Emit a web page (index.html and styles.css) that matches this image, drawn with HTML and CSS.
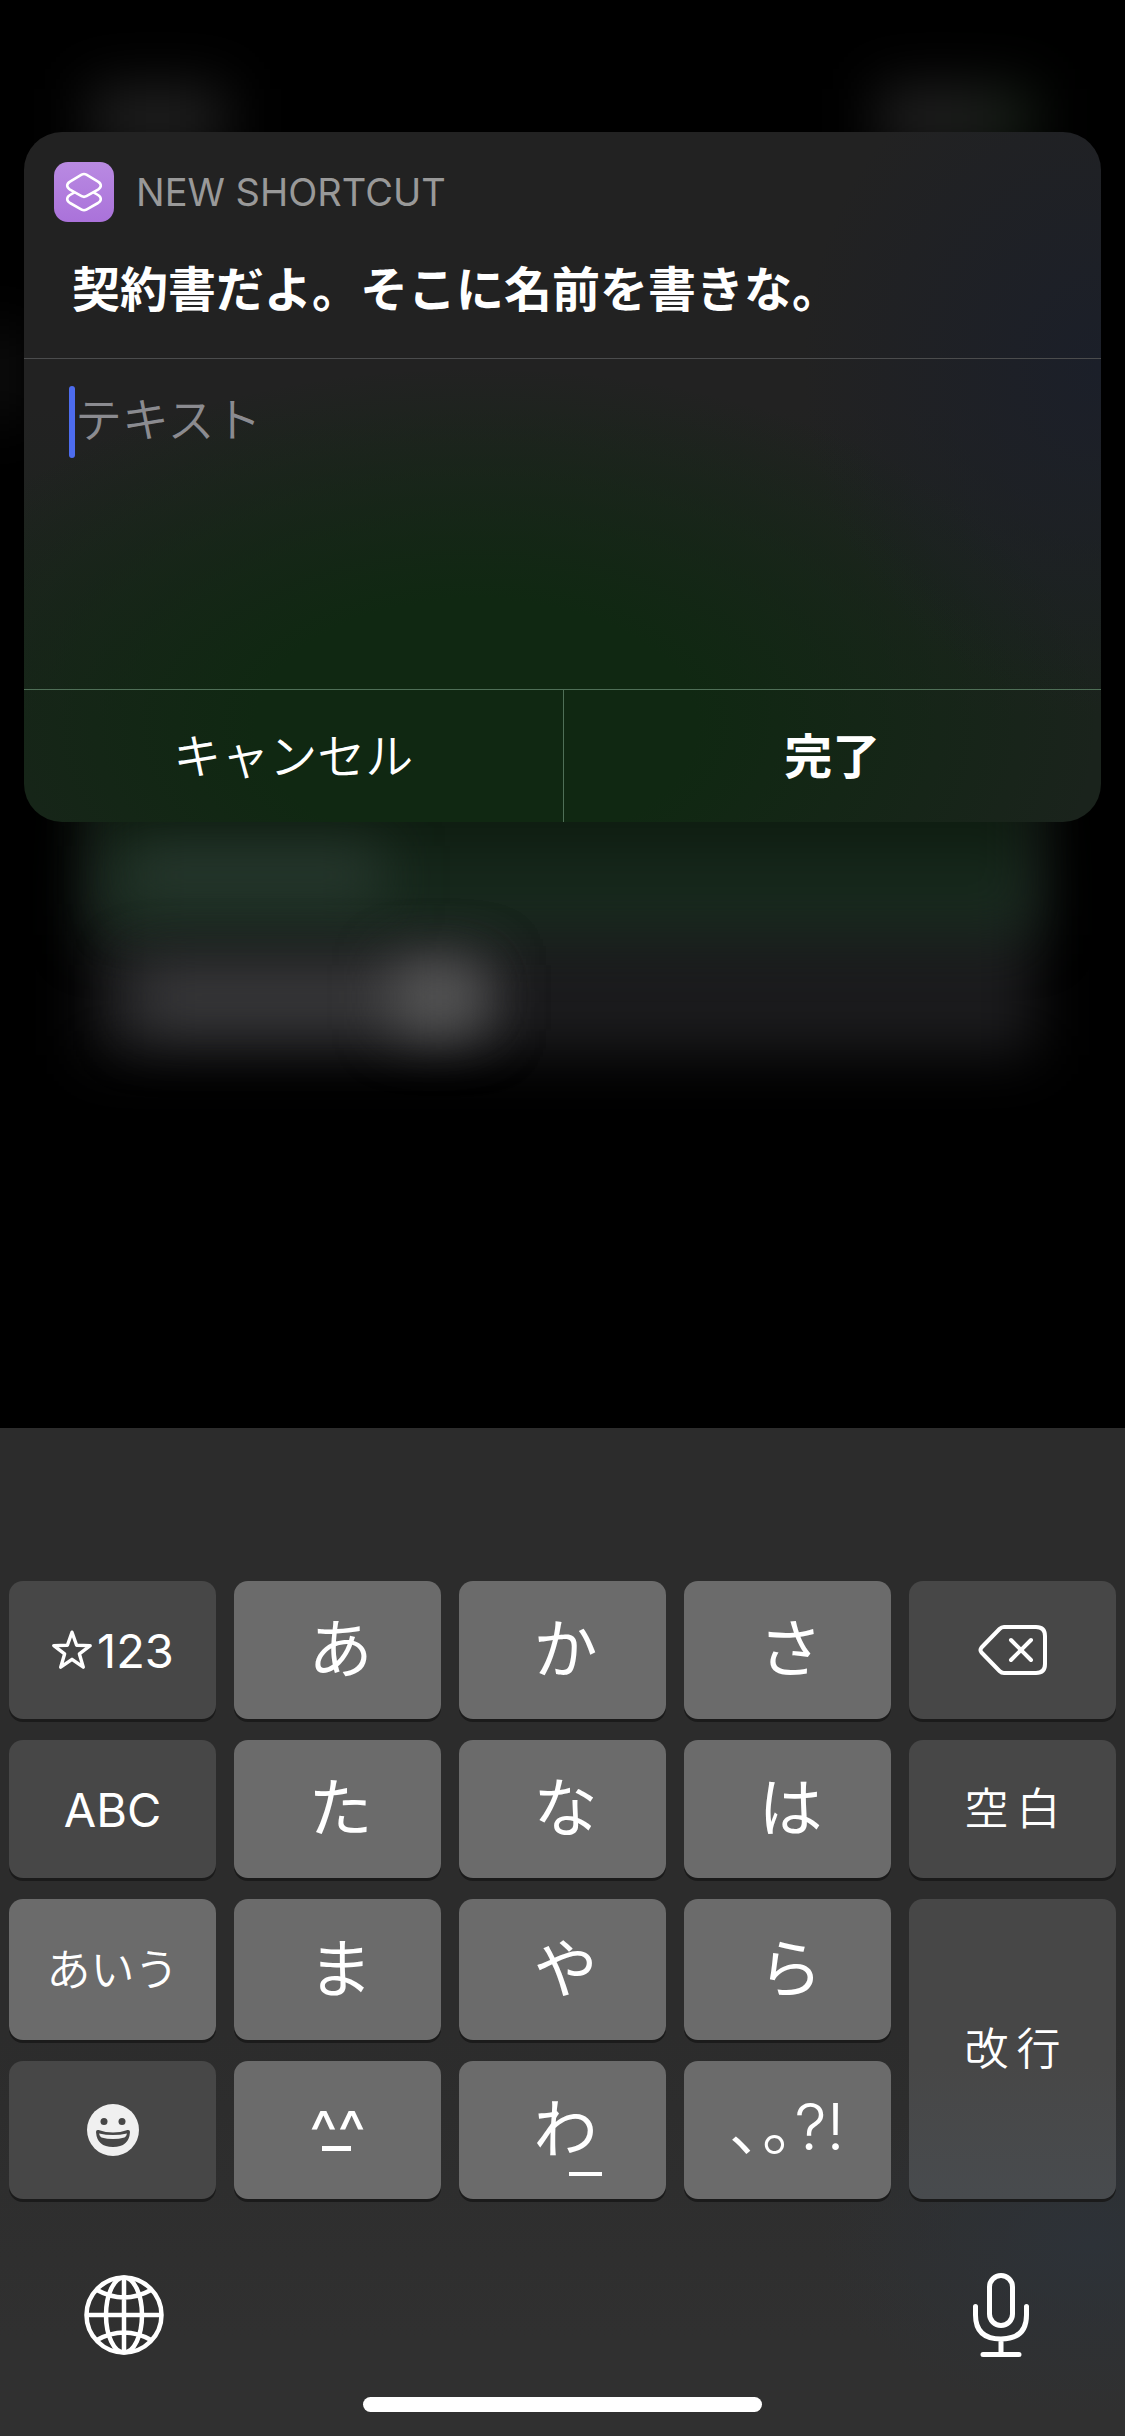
FILE: index.html
```html
<!DOCTYPE html>
<html lang="ja">
<head>
<meta charset="utf-8">
<meta name="viewport" content="width=device-width, initial-scale=1">
<title>New Shortcut</title>
<link rel="stylesheet" href="styles.css">
</head>
<body>
<div class="backdrop" aria-hidden="true">
  <i class="blob blob-tab-left"></i>
  <i class="blob blob-tab-right"></i>
  <i class="blob blob-side"></i>
  <i class="blob blob-panel"></i>
  <i class="blob blob-tile"></i>
  <i class="blob blob-tile-text"></i>
  <i class="blob blob-row-text"></i>
  <i class="blob blob-row-spot"></i>
</div>

<main class="stage">
  <form class="dialog">
    <header class="dialog-head">
      <div class="app">
        <svg class="app-icon" viewBox="0 0 60 60" aria-hidden="true">
          <defs>
            <linearGradient id="tile" x1="0" y1="0" x2="0" y2="1">
              <stop offset="0" stop-color="#b98ae2"/>
              <stop offset="1" stop-color="#aa72da"/>
            </linearGradient>
          </defs>
          <rect width="60" height="60" rx="14" fill="url(#tile)"/>
          <g fill="none" stroke="#fff" stroke-width="2.6" stroke-linejoin="round" stroke-linecap="round">
            <path d="M27.6 12.7Q30 11.4 32.4 12.7L44 19.6Q46.8 21.3 46.8 23.6T44 27.6L32.4 34.2Q30 35.5 27.6 34.2L16 27.6Q13.2 25.9 13.2 23.6T16 19.6Z"/>
            <path d="M20 30.600L16 33Q13.200 34.700 13.200 37T16 41L27.600 47.600Q30 48.900 32.400 47.600L44 41Q46.800 39.300 46.800 37T44 33L40 30.600"/>
          </g>
        </svg>
        <span class="app-name">NEW SHORTCUT</span>
      </div>
      <h1 class="prompt"><label for="answer">契約書だよ。そこに名前を書きな。</label></h1>
    </header>
    <div class="field">
      <span class="caret"></span>
      <textarea id="answer" class="answer" placeholder="テキスト"></textarea>
    </div>
    <div class="actions">
      <button type="button" class="action">キャンセル</button>
      <button type="submit" class="action action-done">完了</button>
    </div>
  </form>
</main>

<section class="keyboard" aria-label="キーボード">
  <div class="keys">
    <button class="key key-dark key-latin"><svg class="star" viewBox="0 0 42 42" aria-hidden="true"><path d="M21 3.200L25.600 16.300L39.200 16.600L28.400 24.900L32.300 38.200L21 30.300L9.700 38.200L13.600 24.900L2.800 16.600L16.400 16.300Z" fill="none" stroke="#fff" stroke-width="3.400" stroke-linejoin="round"/></svg>123</button>
    <button class="key key-kana">あ</button>
    <button class="key key-kana">か</button>
    <button class="key key-kana">さ</button>
    <button class="key key-dark" aria-label="削除">
      <svg class="delete" viewBox="0 0 70 52" aria-hidden="true" fill="none" stroke="#fff" stroke-width="4" stroke-linecap="round" stroke-linejoin="round">
        <path d="M26 3H58Q67 3 67 12V40Q67 49 58 49H26Q23.500 49 21.500 47L3.500 28.500Q1.500 26 3.500 23.500L21.500 5Q23.500 3 26 3Z"/>
        <path d="M33 16L53 36M53 16L33 36"/>
      </svg>
    </button>

    <button class="key key-dark key-latin">ABC</button>
    <button class="key key-kana">た</button>
    <button class="key key-kana">な</button>
    <button class="key key-kana">は</button>
    <button class="key key-dark key-word">空&#8201;白</button>

    <button class="key key-word">あいう</button>
    <button class="key key-kana">ま</button>
    <button class="key key-kana">や</button>
    <button class="key key-kana">ら</button>
    <button class="key key-dark key-word key-return">改&#8201;行</button>

    <button class="key key-dark" aria-label="絵文字">
      <svg class="emoji" viewBox="0 0 52 52" aria-hidden="true">
        <circle cx="26" cy="26" r="26" fill="#f0f0f0"/>
        <circle cx="17" cy="17.500" r="3.500" fill="#474747"/>
        <circle cx="35" cy="17.500" r="3.500" fill="#474747"/>
        <path d="M9 28Q9 25.500 11.500 26Q26 31 40.500 26Q43 25.500 43 28Q42 43 26 43Q10 43 9 28Z" fill="#474747"/>
        <path d="M12 29.500Q26 32.500 40 29.500Q39.500 32.500 37.500 33.500Q26 36.500 14.500 33.500Q12.500 32.500 12 29.500Z" fill="#f0f0f0"/>
      </svg>
    </button>
    <button class="key key-face">^^</button>
    <button class="key key-kana key-wa">わ</button>
    <button class="key key-marks">､｡?!</button>
  </div>

  <div class="tools">
    <button class="tool" aria-label="次のキーボード">
      <svg class="globe" viewBox="0 0 80 80" aria-hidden="true" fill="none" stroke="#fff" stroke-width="4.500">
        <circle cx="40" cy="40" r="37.500"/>
        <ellipse cx="40" cy="40" rx="18" ry="37.500"/>
        <path d="M40 2V78M2 40H78M13 15Q40 30 67 15M13 65Q40 50 67 65"/>
      </svg>
    </button>
    <button class="tool" aria-label="音声入力">
      <svg class="mic" viewBox="0 0 56 84" aria-hidden="true" fill="none" stroke="#fff" stroke-width="5" stroke-linecap="round">
        <rect x="16.500" y="2.500" width="23" height="50" rx="11.500"/>
        <path d="M2.500 33.500V42Q2.500 66 28 66Q53.500 66 53.500 42V33.500M28 66V81M10 81.500H46"/>
      </svg>
    </button>
  </div>
  <div class="home"></div>
</section>
</body>
</html>
```
FILE: styles.css
```css
* {
  box-sizing: border-box;
}

body {
  margin: 0;
  min-height: 100vh;
  display: flex;
  flex-direction: column;
  position: relative;
  overflow-x: hidden;
  background: #000;
  color: #fff;
  font-family: Inter, "Noto Sans CJK JP", sans-serif;
}

button {
  border: 0;
  padding: 0;
  background: none;
  color: inherit;
  font: inherit;
}

svg {
  display: block;
}

/* Dimmed, blurred app content behind the dialog */
.backdrop {
  position: absolute;
  inset: 0;
  overflow: hidden;
}

.blob {
  position: absolute;
  filter: blur(28px);
}

.blob-tab-left {
  left: 8%;
  width: 12%;
  top: 88px;
  height: 60px;
  background: #222;
}

.blob-tab-right {
  right: 8%;
  width: 14%;
  top: 88px;
  height: 60px;
  background: linear-gradient(90deg, #222 50%, #142014);
}

.blob-side {
  left: -20px;
  width: 32px;
  top: 330px;
  height: 90px;
  background: #181818;
}

.blob-panel {
  left: 8%;
  right: 8%;
  top: 700px;
  height: 355px;
  background: #1b1b1d;
}

.blob-tile {
  left: 8%;
  right: 8%;
  top: 700px;
  height: 235px;
  background: linear-gradient(#0d1b0f 50%, #182a1e 80%);
}

.blob-tile-text {
  left: 11%;
  width: 23%;
  top: 845px;
  height: 60px;
  background: #27382e;
}

.blob-row-text {
  left: 12%;
  width: 31%;
  top: 965px;
  height: 66px;
  background: #3a3a3c;
}

.blob-row-spot {
  left: 35%;
  width: 8%;
  top: 965px;
  height: 64px;
  background: #5a5a5a;
}

.stage {
  position: relative;
  padding: 132px 24px 0;
}

.dialog {
  border-radius: 38px;
  overflow: hidden;
  background:
    radial-gradient(ellipse 300px 340px at 100% 34%, #1b1f29, #1b1f2600),
    radial-gradient(ellipse 58% 52% at 42% 86%, #102812 35%, #10281200),
    linear-gradient(#222 40%, #1a231c 85%);
}

.dialog-head {
  padding: 30px 30px 0;
  height: 227px;
  border-bottom: 1px solid #4b4c4d;
}

.app {
  display: flex;
  align-items: center;
  gap: 22px;
}

.app-icon {
  width: 60px;
  height: 60px;
}

.app-name {
  font-size: 38px;
  line-height: 60px;
  color: #999;
}

.prompt {
  margin: 33px 18px 0;
  font-size: 48px;
  line-height: 70px;
  font-weight: 700;
}

.field {
  display: flex;
  height: 330px;
  padding: 27px 45px 0;
}

.caret {
  width: 6px;
  height: 72px;
  border-radius: 3px;
  background: #4d6cee;
}

.answer {
  flex: 1;
  height: 280px;
  border: 0;
  padding: 0;
  outline: 0;
  resize: none;
  background: none;
  color: #fff;
  font: 350 47px/62px "Noto Sans CJK JP", sans-serif;
}

.answer::placeholder {
  color: #8b8b90;
  opacity: 1;
}

.actions {
  display: grid;
  grid-template-columns: 1fr 1fr;
  border-top: 1px solid #4f6f57;
}

.action {
  height: 132px;
  padding-top: 2px;
  font-size: 48px;
  font-weight: 350;
  line-height: 70px;
}

.action-done {
  border-left: 1px solid #4f6f57;
  font-weight: 700;
}

.keyboard {
  position: relative;
  margin-top: auto;
  padding: 153px 9px 24px;
  background:
    radial-gradient(ellipse 270px 170px at 97% 81%, #2d3238, #2f2f2f00),
    linear-gradient(#2c2c2c 60%, #303030 90%);
}

.keys {
  display: grid;
  grid-template-columns: repeat(5, 1fr);
  grid-template-rows: 138px 138px 141px 138px;
  gap: 21px 18px;
}

.key {
  display: flex;
  align-items: center;
  justify-content: center;
  border-radius: 14px;
  background: #6b6b6b;
  box-shadow: 0 3px 0 #1b1b1b;
}

.key-dark {
  background: #474747;
}

.key-latin {
  gap: 4px;
  font-size: 47px;
}

.key-kana {
  padding: 0 0 2px 6px;
  font-size: 64px;
  line-height: 90px;
}

.key-word {
  font-size: 44px;
  font-weight: 350;
  line-height: 64px;
}

.key-return {
  grid-row: span 2;
  background: linear-gradient(#474747 55%, #484b4e);
}

.key-face,
.key-wa {
  position: relative;
}

.key-face {
  padding-top: 2px;
  font-size: 60px;
  line-height: 70px;
}

/* Strokes drawn under the face and the kana */
.key-face::after,
.key-wa::after {
  content: "";
  position: absolute;
  background: #fff;
}

.key-face::after {
  left: 88px;
  top: 85px;
  width: 29px;
  height: 5px;
}

.key-wa::after {
  left: 110px;
  top: 111px;
  width: 33px;
  height: 4px;
}

.key-marks {
  padding-bottom: 6px;
  font-size: 64px;
  font-weight: 350;
  line-height: 90px;
}

.star {
  width: 42px;
  height: 42px;
}

.delete {
  width: 70px;
  height: 52px;
}

.emoji {
  width: 52px;
  height: 52px;
}

.tools {
  display: flex;
  justify-content: space-between;
  align-items: center;
  height: 198px;
  padding: 34px 75px 0;
}

.globe {
  width: 80px;
  height: 80px;
}

.mic {
  width: 56px;
  height: 84px;
}

.tools .tool:last-child {
  padding-right: 12px;
}

.home {
  width: 36%;
  height: 15px;
  margin: 0 auto;
  border-radius: 8px;
  background: #fff;
}
```
